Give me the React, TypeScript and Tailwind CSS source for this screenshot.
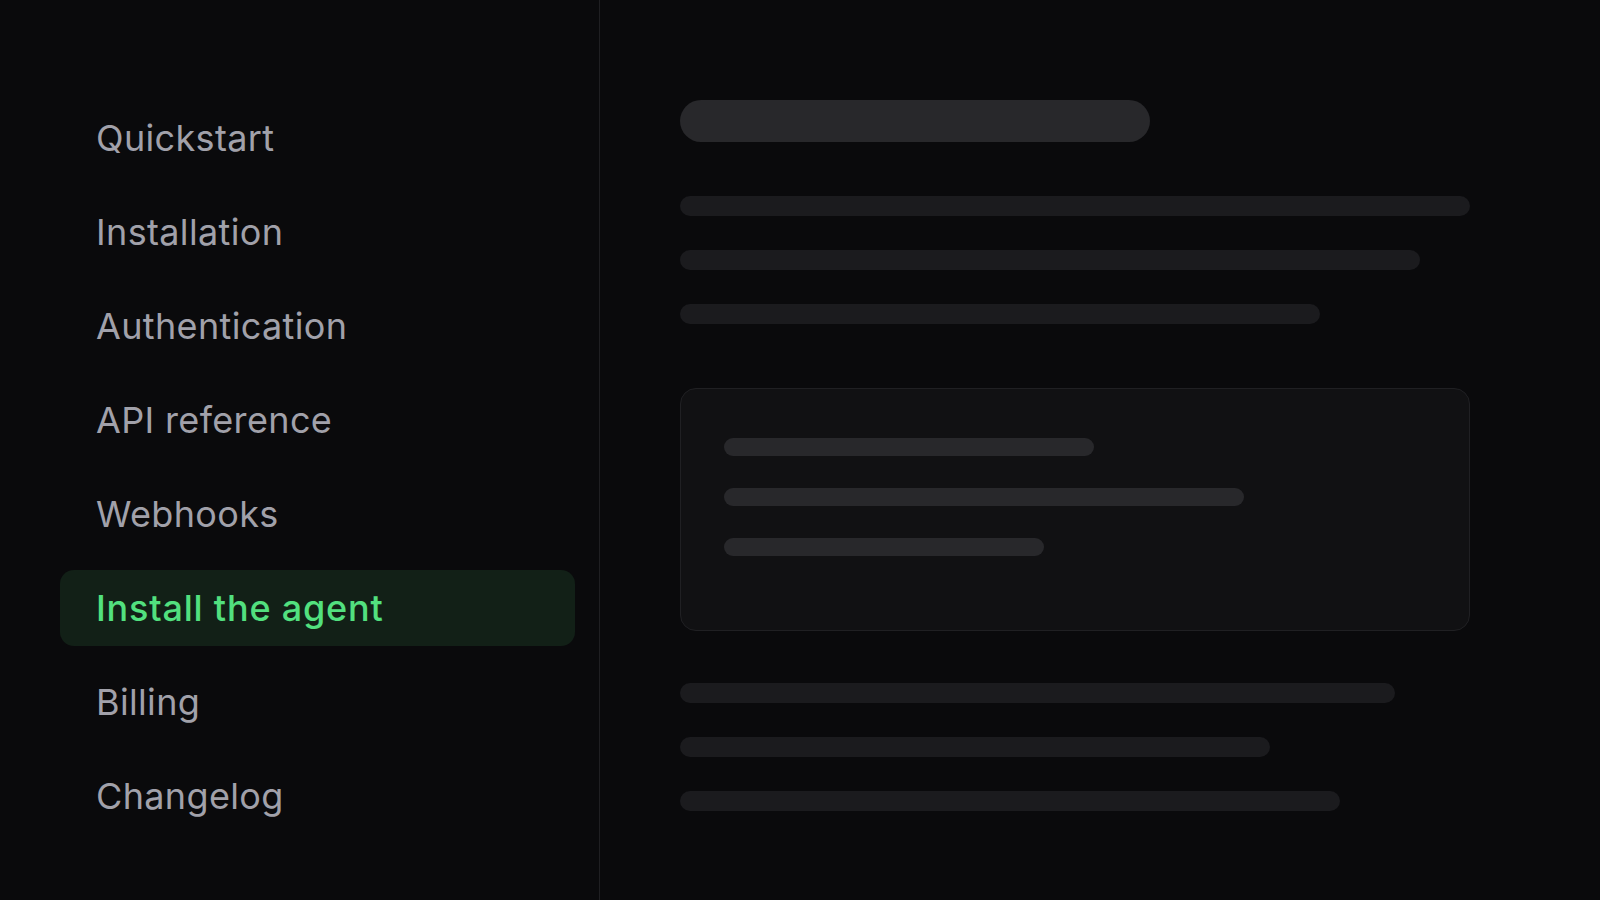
const navItems = [
  "Quickstart",
  "Installation",
  "Authentication",
  "API reference",
  "Webhooks",
  "Install the agent",
  "Billing",
  "Changelog",
];

const ACTIVE = "Install the agent";

function Bar({ width, className }: { width: number; className: string }) {
  return <div className={`rounded-full ${className}`} style={{ width }} />;
}

export default function App() {
  return (
    <div
      className="flex h-screen w-full overflow-hidden bg-[#0a0a0c]"
      style={{ fontFamily: "Inter, 'Noto Sans', sans-serif" }}
    >
      {/* Sidebar */}
      <aside className="w-[600px] shrink-0 border-r border-[#1f1f22] pl-[60px] pr-[24px] pt-[100px]">
        <nav className="flex flex-col gap-[18px]">
          {navItems.map((item) => {
            const active = item === ACTIVE;
            return (
              <div
                key={item}
                className={`flex h-[76px] items-center rounded-[14px] px-9 pb-px text-[36px] ${
                  active
                    ? "bg-[#122017] font-medium tracking-[0.8px] text-[#52e07f]"
                    : "tracking-[0.35px] text-[#a1a1aa]"
                }`}
              >
                {item}
              </div>
            );
          })}
        </nav>
      </aside>

      {/* Content skeleton */}
      <main className="flex-1 pl-[80px] pt-[100px]">
        <div className="h-[42px] w-[470px] rounded-full bg-[#28282b]" />

        <div className="mt-[54px] flex flex-col gap-[34px]">
          <Bar width={790} className="h-5 bg-[#1b1b1e]" />
          <Bar width={740} className="h-5 bg-[#1b1b1e]" />
          <Bar width={640} className="h-5 bg-[#1b1b1e]" />
        </div>

        <div className="mt-[64px] h-[243px] w-[790px] rounded-2xl border border-[#202023] bg-[#111113] px-[43px] pt-[49px]">
          <div className="flex flex-col gap-[32px]">
            <Bar width={370} className="h-[18px] bg-[#28282b]" />
            <Bar width={520} className="h-[18px] bg-[#28282b]" />
            <Bar width={320} className="h-[18px] bg-[#28282b]" />
          </div>
        </div>

        <div className="mt-[52px] flex flex-col gap-[34px]">
          <Bar width={715} className="h-5 bg-[#1b1b1e]" />
          <Bar width={590} className="h-5 bg-[#1b1b1e]" />
          <Bar width={660} className="h-5 bg-[#1b1b1e]" />
        </div>
      </main>
    </div>
  );
}
